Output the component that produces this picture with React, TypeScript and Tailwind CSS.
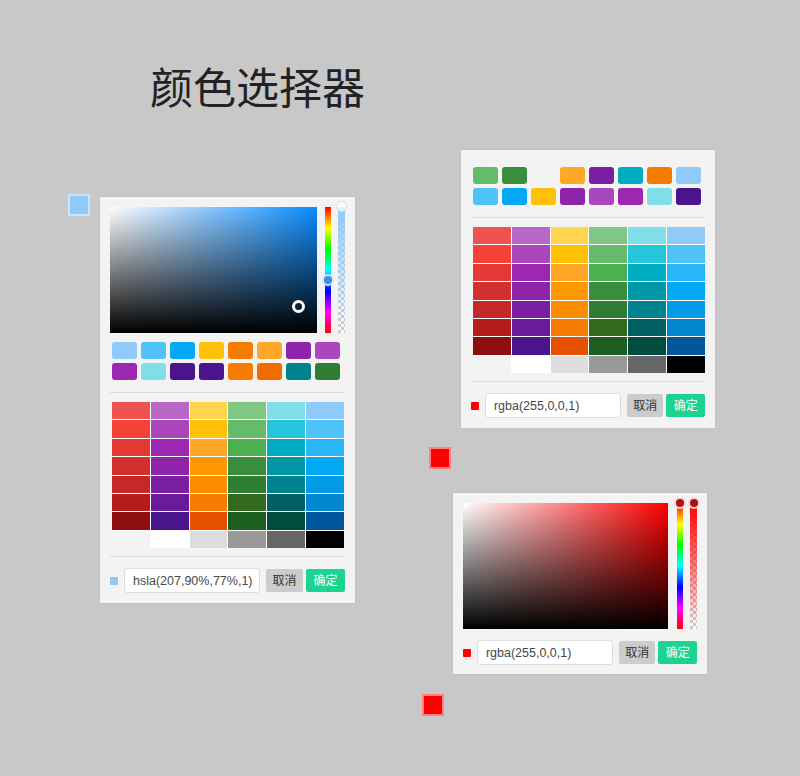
import React from 'react';

const GRID: string[][] = [
  ['#ef5350', '#ba68c8', '#ffd54f', '#81c784', '#80deea', '#90caf9'],
  ['#f44336', '#ab47bc', '#ffc107', '#66bb6a', '#26c6da', '#4fc3f7'],
  ['#e53935', '#9c27b0', '#ffa726', '#4caf50', '#00acc1', '#29b6f6'],
  ['#d32f2f', '#8e24aa', '#ff9800', '#388e3c', '#0097a7', '#03a9f4'],
  ['#c62828', '#7b1fa2', '#fb8c00', '#2e7d32', '#00838f', '#039be5'],
  ['#b71c1c', '#6a1b9a', '#f57c00', '#33691e', '#006064', '#0288d1'],
  ['#8e0e0e', '#4a148c', '#e65100', '#1b5e20', '#004d40', '#01579b'],
  ['transparent', '#ffffff', '#dddddd', '#999999', '#666666', '#000000'],
];

const LEFT_SWATCHES = [
  '#90caf9', '#4fc3f7', '#03a9f4', '#ffc107', '#f57c00', '#ffa726', '#8e24aa', '#ab47bc',
  '#9c27b0', '#80deea', '#4a148c', '#4a148c', '#f57c00', '#ef6c00', '#00838f', '#2e7d32',
];

const RIGHT_SWATCHES = [
  '#66bb6a', '#388e3c', 'transparent', '#ffa726', '#7b1fa2', '#00acc1', '#f57c00', '#90caf9',
  '#4fc3f7', '#03a9f4', '#ffc107', '#8e24aa', '#ab47bc', '#9c27b0', '#80deea', '#4a148c',
];

function Swatches({ colors }: { colors: string[] }) {
  return (
    <div className="ml-[2px] grid grid-cols-[repeat(8,25px)] gap-[4px]">
      {colors.map((c, i) => (
        <div key={i} className="h-[17px] rounded-[3px]" style={{ backgroundColor: c }} />
      ))}
    </div>
  );
}

function Palette({ swatches, className = '' }: { swatches: string[]; className?: string }) {
  return (
    <div className={className}>
      <Swatches colors={swatches} />
      <div className="mt-[12px] h-px bg-[#dcdcdc]" />
      <div className="ml-[2px] mt-[9px] grid h-[146px] w-[232px] grid-cols-6 grid-rows-8 gap-px bg-white">
        {GRID.flat().map((c, i) => (
          <div key={i} style={{ backgroundColor: c === 'transparent' ? '#f3f3f3' : c }} />
        ))}
      </div>
      <div className="mt-[8px] h-px bg-[#dcdcdc]" />
    </div>
  );
}

function Footer({ color, value, className = '' }: { color: string; value: string; className?: string }) {
  return (
    <div className={`flex items-center ${className}`}>
      <div className="h-2 w-2 rounded-[1px]" style={{ backgroundColor: color }} />
      <input
        readOnly
        value={value}
        className="ml-[6px] h-[25px] w-[136px] rounded-[3px] border border-[#dddddd] bg-white pl-[8px] pr-0 text-[12.5px] text-[#484848] outline-none"
      />
      <button
        type="button"
        className="ml-[6px] h-[23px] w-[37px] rounded-[2px] bg-[#cccccc] text-[12px] text-[#333]"
      >
        取消
      </button>
      <button
        type="button"
        className="ml-[3px] h-[23px] w-[39px] rounded-[2px] bg-[#1dd391] text-[12px] text-white"
      >
        确定
      </button>
    </div>
  );
}

function Checker({ children }: { children?: React.ReactNode }) {
  return (
    <div className="relative h-[126px] w-[7px] bg-white bg-[repeating-conic-gradient(#cccccc_0%_25%,#ffffff_0%_50%)] bg-[length:6px_6px]">
      {children}
    </div>
  );
}

export default function App() {
  return (
    <div
      className="relative h-[776px] w-[800px] overflow-hidden bg-[#c8c8c8]"
      style={{ fontFamily: '"Liberation Sans", "Noto Sans CJK SC", sans-serif' }}
    >
      <h1 className="pl-[150px] pt-[64px] text-[43px] font-normal leading-none text-[#222]" style={{ fontFamily: '"Noto Sans CJK SC", sans-serif' }}>
        颜色选择器
      </h1>

      {/* trigger swatches */}
      <div className="absolute left-[68px] top-[194px] h-[22px] w-[22px] border-2 border-white/50 bg-[#90caf9]" />
      <div className="absolute left-[429px] top-[447px] h-[22px] w-[22px] border-2 border-white/50 bg-[#ff0000]" />
      <div className="absolute left-[422px] top-[694px] h-[22px] w-[22px] border-2 border-white/50 bg-[#ff0000]" />

      {/* left picker */}
      <div className="absolute left-[100px] top-[197px] w-[255px] bg-[#f3f3f3] px-[10px] pb-[10px] pt-[10px] shadow-[0_0_2px_rgba(0,0,0,0.08)]">
        <div className="flex">
          <div className="relative h-[126px] w-[207px] overflow-hidden bg-[#0a8cff]">
            <div className="absolute inset-0 bg-linear-to-r from-white to-white/0" />
            <div className="absolute inset-0 bg-linear-to-t from-black to-black/0" />
            <div className="absolute left-[182px] top-[93px] h-[13px] w-[13px] rounded-full border-[3px] border-white" />
          </div>
          <div className="relative ml-[8px] h-[126px] w-[6px] bg-[linear-gradient(to_bottom,#ff0000,#ffff00,#00ff00,#00ffff,#0000ff,#ff00ff,#ff0000)]">
            <div className="absolute left-[-3px] top-[67px] h-[12px] w-[12px] rounded-full border-2 border-[#cfe2f3] bg-[#3b8fde]" />
          </div>
          <div className="ml-[7px]">
            <Checker>
              <div className="absolute inset-0 bg-linear-to-b from-[#90caf9] to-[#90caf9]/0" />
              <div className="absolute left-[-2px] top-[-6px] h-[11px] w-[11px] rounded-full border border-[#dddddd] bg-white/70" />
            </Checker>
          </div>
        </div>
        <Palette swatches={LEFT_SWATCHES} className="mt-[9px]" />
        <Footer color="#90caf9" value="hsla(207,90%,77%,1)" className="mt-[11px]" />
      </div>

      {/* top right picker, palette only */}
      <div className="absolute left-[461px] top-[150px] w-[254px] bg-[#f3f3f3] px-[10px] pb-[10px] pt-[17px] shadow-[0_0_2px_rgba(0,0,0,0.08)]">
        <Palette swatches={RIGHT_SWATCHES} />
        <Footer color="#ff0000" value="rgba(255,0,0,1)" className="mt-[11px]" />
      </div>

      {/* bottom right picker, no palette */}
      <div className="absolute left-[453px] top-[493px] w-[254px] bg-[#f3f3f3] px-[10px] pb-[9px] pt-[10px] shadow-[0_0_2px_rgba(0,0,0,0.08)]">
        <div className="flex">
          <div className="relative h-[126px] w-[206px] overflow-hidden bg-[#ff0000]">
            <div className="absolute inset-0 bg-linear-to-r from-white to-white/0" />
            <div className="absolute inset-0 bg-linear-to-t from-black to-black/0" />
            <div className="absolute left-[-6px] top-[-6px] h-[12px] w-[12px] rounded-full border-[3px] border-white" />
          </div>
          <div className="relative ml-[9px] h-[126px] w-[6px] bg-[linear-gradient(to_bottom,#ff0000,#ffff00,#00ff00,#00ffff,#0000ff,#ff00ff,#ff0000)]">
            <div className="absolute left-[-3px] top-[-6px] h-[12px] w-[12px] rounded-full border-2 border-[#f3d6d6] bg-[#b01010]" />
          </div>
          <div className="ml-[7px]">
            <Checker>
              <div className="absolute inset-0 bg-linear-to-b from-[#ff0000] to-[#ff0000]/0" />
              <div className="absolute left-[-2px] top-[-6px] h-[12px] w-[12px] rounded-full border-2 border-[#f3d6d6] bg-[#b01010]" />
            </Checker>
          </div>
        </div>
        <Footer color="#ff0000" value="rgba(255,0,0,1)" className="mt-[11px]" />
      </div>
    </div>
  );
}
